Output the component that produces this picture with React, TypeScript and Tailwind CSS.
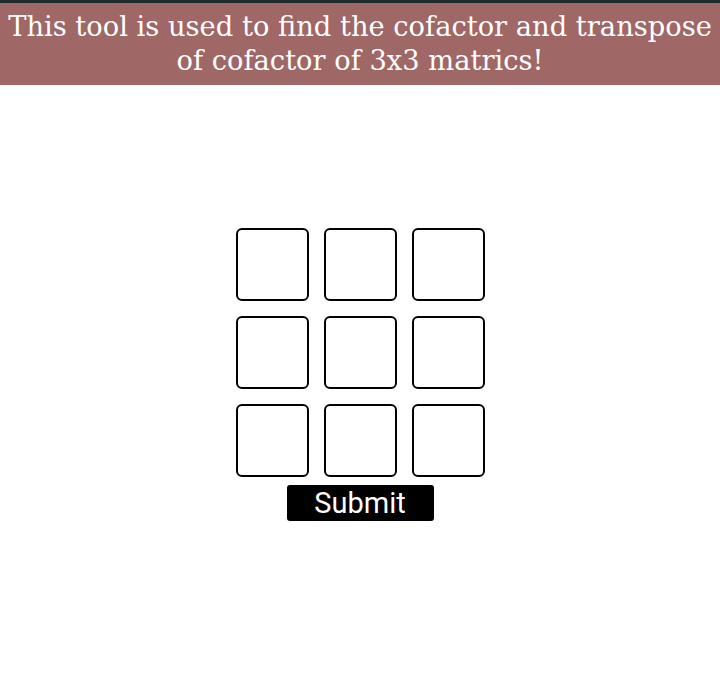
import React, { useState } from "react";

const App: React.FC = () => {
  const [cells, setCells] = useState<string[]>(Array(9).fill(""));

  return (
    <div className="min-h-[673px] bg-white">
      <div className="h-[3px] bg-[#1d2b2d]" />
      <header className="bg-[#a06767] h-[82px] flex items-center justify-center px-1">
        <h1
          className="text-white text-center text-[27.3px] leading-[34px]"
          style={{ fontFamily: '"DejaVu Serif", "Liberation Serif", serif' }}
        >
          This tool is used to find the cofactor and transpose of cofactor of 3x3 matrics!
        </h1>
      </header>

      <div className="flex flex-col items-center pt-[143px]">
        <div className="grid grid-cols-3 gap-[15px]">
          {cells.map((v, i) => (
            <input
              key={i}
              value={v}
              onChange={(e) => {
                const next = [...cells];
                next[i] = e.target.value;
                setCells(next);
              }}
              className="w-[73px] h-[73px] border-2 border-black rounded-md text-center outline-none"
            />
          ))}
        </div>
        <button
          className="mt-[8px] w-[147px] h-[36px] bg-black text-white text-[29px] leading-none rounded-[3px]"
          style={{ fontFamily: "Roboto, sans-serif" }}
        >
          Submit
        </button>
      </div>
    </div>
  );
};

export default App;
